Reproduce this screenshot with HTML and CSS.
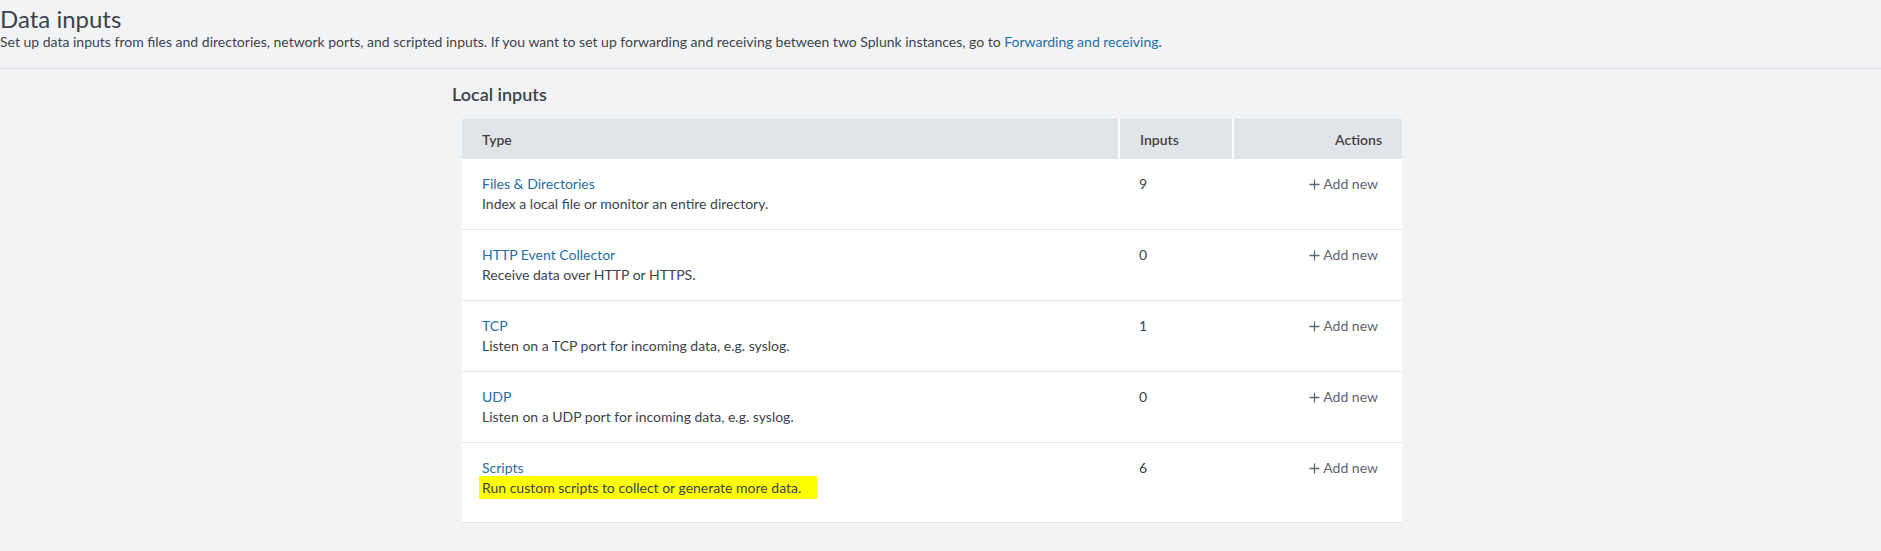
FILE: index.html
```html
<!DOCTYPE html>
<html lang="en">
<head>
<meta charset="utf-8">
<title>Data inputs</title>
<link rel="stylesheet" href="styles.css">
</head>
<body>
<header class="page-header">
  <h1 class="page-title">Data inputs</h1>
  <p class="page-desc">Set up data inputs from files and directories, network ports, and scripted inputs. If you want to set up forwarding and receiving between two Splunk instances, go to <a class="link" href="#">Forwarding and receiving</a>.</p>
</header>
<main class="content">
  <section class="section">
    <h2 class="section-title">Local inputs</h2>
    <table class="inputs-table">
      <thead>
        <tr>
          <th class="col-type">Type</th>
          <th class="col-inputs">Inputs</th>
          <th class="col-actions">Actions</th>
        </tr>
      </thead>
      <tbody>
        <tr>
          <td class="cell-type"><a class="link" href="#">Files &amp; Directories</a><div class="type-desc">Index a local file or monitor an entire directory.</div></td>
          <td class="cell-inputs">9</td>
          <td class="cell-actions"><a class="add-new" href="#"><svg class="plus" width="11" height="11" viewBox="0 0 11 11"><path d="M5.5 0.5V10.5M0.5 5.5H10.5" stroke="currentColor" stroke-width="1.3" fill="none"/></svg>Add new</a></td>
        </tr>
        <tr>
          <td class="cell-type"><a class="link" href="#">HTTP Event Collector</a><div class="type-desc">Receive data over HTTP or HTTPS.</div></td>
          <td class="cell-inputs">0</td>
          <td class="cell-actions"><a class="add-new" href="#"><svg class="plus" width="11" height="11" viewBox="0 0 11 11"><path d="M5.5 0.5V10.5M0.5 5.5H10.5" stroke="currentColor" stroke-width="1.3" fill="none"/></svg>Add new</a></td>
        </tr>
        <tr>
          <td class="cell-type"><a class="link" href="#">TCP</a><div class="type-desc">Listen on a TCP port for incoming data, e.g. syslog.</div></td>
          <td class="cell-inputs">1</td>
          <td class="cell-actions"><a class="add-new" href="#"><svg class="plus" width="11" height="11" viewBox="0 0 11 11"><path d="M5.5 0.5V10.5M0.5 5.5H10.5" stroke="currentColor" stroke-width="1.3" fill="none"/></svg>Add new</a></td>
        </tr>
        <tr>
          <td class="cell-type"><a class="link" href="#">UDP</a><div class="type-desc">Listen on a UDP port for incoming data, e.g. syslog.</div></td>
          <td class="cell-inputs">0</td>
          <td class="cell-actions"><a class="add-new" href="#"><svg class="plus" width="11" height="11" viewBox="0 0 11 11"><path d="M5.5 0.5V10.5M0.5 5.5H10.5" stroke="currentColor" stroke-width="1.3" fill="none"/></svg>Add new</a></td>
        </tr>
        <tr class="last-row">
          <td class="cell-type"><a class="link" href="#">Scripts</a><div class="type-desc"><span class="highlight">Run custom scripts to collect or generate more data.</span></div></td>
          <td class="cell-inputs">6</td>
          <td class="cell-actions"><a class="add-new" href="#"><svg class="plus" width="11" height="11" viewBox="0 0 11 11"><path d="M5.5 0.5V10.5M0.5 5.5H10.5" stroke="currentColor" stroke-width="1.3" fill="none"/></svg>Add new</a></td>
        </tr>
      </tbody>
    </table>
  </section>
</main>
</body>
</html>
```
FILE: styles.css
```css
html, body {
  margin: 0;
  padding: 0;
  background: #f2f3f5;
  font-family: Lato, "Open Sans", sans-serif;
  color: #3c444d;
  font-size: 14px;
}

.page-header {
  height: 69px;
  border-bottom: 1px solid #dddfe3;
  box-sizing: border-box;
  padding-top: 5px;
}

.page-title {
  margin: 0;
  font-size: 24px;
  font-weight: 400;
  line-height: 27px;
  color: #3c444d;
}

.page-desc {
  margin: 0;
  font-size: 14px;
  line-height: 20px;
}

.link {
  color: #1f6fa8;
  text-decoration: none;
}

.content {
  padding-right: 17px;
  padding-top: 15px;
}

.section {
  width: 960px;
  margin: 0 auto;
}

.section-title {
  margin: 0 0 15px 0;
  font-size: 18px;
  font-weight: 600;
  line-height: 20px;
  color: #3c444d;
}

.inputs-table {
  margin: 0 10px;
  width: 940px;
  border-collapse: collapse;
  background: #ffffff;
  table-layout: fixed;
  border-bottom: 1px solid #e4e7ea;
}

.inputs-table th {
  background: #e1e4e8;
  height: 40px;
  padding: 0 20px;
  font-size: 14px;
  font-weight: 600;
  color: #3c444d;
  text-align: left;
  box-sizing: border-box;
}

.col-type { width: 657px; }
.col-inputs {
  width: 114px;
  border-left: 2px solid #ffffff;
}
.inputs-table th.col-actions {
  text-align: right;
  border-left: 2px solid #ffffff;
}

.inputs-table td {
  vertical-align: top;
  padding: 15px 20px;
  line-height: 20px;
  font-size: 14px;
  border-bottom: 1px solid #e1e6eb;
}

.inputs-table .last-row td {
  border-bottom: none;
  padding-bottom: 24px;
}

.type-desc {
  color: #3c444d;
}

.cell-inputs {
  color: #3c444d;
}

.inputs-table td.cell-actions {
  text-align: right;
  padding-right: 24px;
}

.add-new {
  color: #5c6773;
  text-decoration: none;
}

.plus {
  display: inline-block;
  vertical-align: -1px;
  margin-right: 3px;
}

.highlight {
  background: #ffff00;
  padding: 3px 16px 3px 3px;
  margin-left: -3px;
}
```
